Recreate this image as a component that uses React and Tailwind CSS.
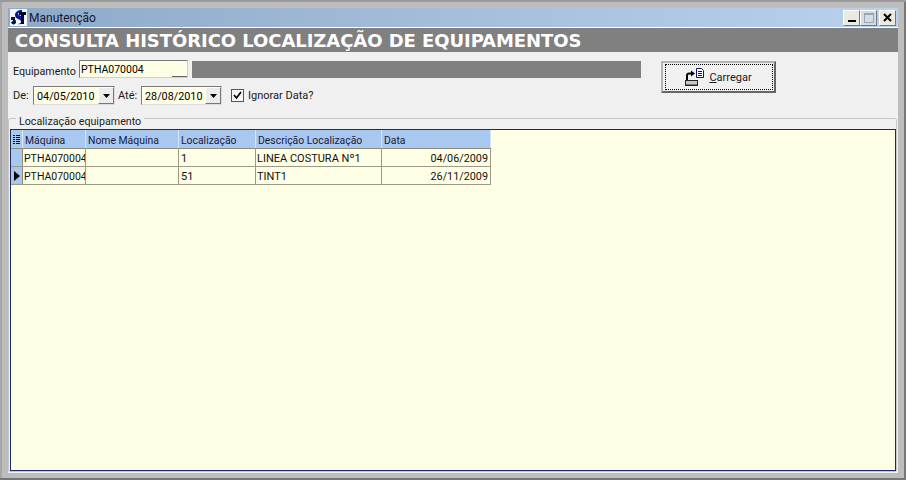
const columns = [
  { label: "Máquina", width: "w-[63px]" },
  { label: "Nome Máquina", width: "w-[93px]" },
  { label: "Localização", width: "w-[77px]" },
  { label: "Descrição Localização", width: "w-[126px]" },
  { label: "Data", width: "w-[109px]" },
];

const rows = [
  { maquina: "PTHA070004", local: "1", descricao: "LINEA COSTURA Nº1", data: "04/06/2009" },
  { maquina: "PTHA070004", local: "51", descricao: "TINT1", data: "26/11/2009", current: true },
];

function AppLogo() {
  return (
    <svg width="17" height="17" viewBox="0 0 17 17" className="shrink-0">
      <rect width="17" height="17" fill="#f4f6fb" />
      <path d="M3 11c2-1 3 0 3 2s-2 3-4 2l-1-2c1 0 2-1 2-2z" fill="#06103a" />
      <path d="M12 1c-4 0-7 2-7 5s3 4 5 5 1 4-2 4c3 1 6-1 6-4s-3-4-5-5-1-3 3-3z" fill="#0a1a8c" />
      <path d="M9 3h7v3h-2v9h-3V6H9z" fill="#02061f" />
      <path d="M1 8h4v3H1z" fill="#0a1236" />
    </svg>
  );
}

function WindowButton({ children, muted }) {
  return (
    <div className={`flex h-[16px] w-[17px] items-center justify-center border border-t-white border-l-white border-r-[#777] border-b-[#777] ${muted ? "bg-[#d4dde6]" : "bg-[#ece9e0]"}`}>
      {children}
    </div>
  );
}

function DateField({ value, width }) {
  return (
    <div className={`flex h-[19px] ${width} items-center border border-t-[#7a7a7a] border-l-[#7a7a7a] border-r-[#dcdcdc] border-b-[#dcdcdc] bg-[#ffffe5]`}>
      <span className="flex-1 pl-[3px] pt-[1px] text-[10.800px] text-black">{value}</span>
      <div className="flex h-[17px] w-[16px] items-center justify-center bg-[#ececec] border border-t-white border-l-white border-r-[#777] border-b-[#777]">
        <svg width="7" height="4" viewBox="0 0 7 4"><path d="M0 0h7L3.500 4z" fill="#000" /></svg>
      </div>
    </div>
  );
}

function LoadIcon() {
  return (
    <svg width="20" height="19" viewBox="0 0 20 19" className="shrink-0">
      <rect x="0.500" y="12.500" width="12" height="5" fill="#c8c8c8" stroke="#222" />
      <rect x="1" y="16" width="11" height="1" fill="#777" />
      <path d="M2 12V7.500C2 6 3 5.500 4 5.500h3" fill="none" stroke="#000" strokeWidth="2" />
      <path d="M6 2.500l4 3-4 3z" fill="#000" />
      <path d="M11.500 0.500h5l2 2v7h-7z" fill="#fff" stroke="#10106a" />
      <path d="M13 3.500h4M13 5.500h4M13 7.500h4" stroke="#10106a" />
    </svg>
  );
}

export default function App() {
  return (
    <div className="flex h-[480px] w-[906px] flex-col bg-[#bdbdbd] pl-[8px] pr-[8px] pt-[8px] pb-[7px] text-[11px] leading-[13px] text-[#1a1a1a] shadow-[inset_0_2px_0_#9a9a9a,inset_0_-2px_0_#777,inset_2px_0_0_#a6a6a6,inset_-2px_0_0_#777]" style={{ fontFamily: "Roboto, Tahoma, sans-serif" }}>
      <div className="flex h-[20px] shrink-0 items-center gap-[2px] border-b border-white bg-gradient-to-r from-[#8fa9c8] to-[#b8d2ee] pl-[2px] pr-[2px]">
        <AppLogo />
        <span className="flex-1 pt-[1px] text-[12px] text-[#10183a]">Manutenção</span>
        <div className="flex items-center">
          <WindowButton>
            <div className="mt-[6px] h-[2px] w-[8px] bg-black" />
          </WindowButton>
          <WindowButton muted>
            <div className="h-[10px] w-[10px] border border-[#9aa5b0] border-t-2" />
          </WindowButton>
          <div className="ml-[2px]">
            <WindowButton>
              <svg width="9" height="9" viewBox="0 0 9 9"><path d="M1 1l7 7M8 1l-7 7" stroke="#000" strokeWidth="2" /></svg>
            </WindowButton>
          </div>
        </div>
      </div>

      <div className="flex h-[24px] shrink-0 items-center bg-[#808080] pl-[7px] pt-[2px]">
        <h1 className="whitespace-nowrap text-[18px] font-bold leading-none tracking-[-0.06px] text-white" style={{ fontFamily: "'DejaVu Sans', Verdana, sans-serif" }}>
          CONSULTA HISTÓRICO LOCALIZAÇÃO DE EQUIPAMENTOS
        </h1>
      </div>

      <div className="flex min-h-0 flex-1 flex-col bg-[#f0f0f0] pr-[1px] pb-[1px]">
        <div className="flex h-[61px] shrink-0">
          <div className="flex w-[640px] flex-col pl-[5px] pt-[8px]">
            <div className="flex items-center">
              <span className="w-[66px] pt-[4px] text-[10.700px]">Equipamento</span>
              <div className="relative h-[18px] w-[109px] border border-t-[#7a7a7a] border-l-[#7a7a7a] border-r-[#cfcfcf] border-b-[#cfcfcf] bg-[#ffffe5] pl-[1px] pt-[2px] text-[10.500px] text-black">
                PTHA070004
                <div className="absolute bottom-0 right-0 h-[1px] w-[15px] bg-[#666]" />
              </div>
              <div className="ml-[4px] h-[17px] w-[449px] bg-[#808080]" />
            </div>
            <div className="mt-[8px] flex items-center">
              <span className="w-[20px]">De:</span>
              <DateField value="04/05/2010" width="w-[82px]" />
              <span className="ml-[3px] w-[23px]">Até:</span>
              <DateField value="28/08/2010" width="w-[81px]" />
              <div className="ml-[9px] flex h-[13px] w-[13px] items-center justify-center border border-[#555] bg-[#f6f6f6]">
                <svg width="9" height="9" viewBox="0 0 9 9"><path d="M1 4l2.500 3L8 1" fill="none" stroke="#000" strokeWidth="1.700" /></svg>
              </div>
              <span className="ml-[4px]">Ignorar Data?</span>
            </div>
          </div>
          <div className="pl-[13px] pt-[9px]">
            <button className="flex h-[32px] w-[115px] items-center justify-center border-2 border-t-[#b4b4b4] border-l-[#b4b4b4] border-r-[#666] border-b-[#666] bg-[#f0f0f0]">
              <div className="flex h-[26px] w-[108px] items-center justify-center gap-[4px] border border-dotted border-black">
                <LoadIcon />
                <span><span className="underline">C</span>arregar</span>
              </div>
            </button>
          </div>
        </div>

        <fieldset className="flex min-h-0 flex-1 flex-col rounded-[2px] border border-[#c8c8c8] pl-[1px]">
          <legend className="ml-[6px] translate-y-[4px] px-[3px] text-[10.700px] leading-[10px] text-[#222]">Localização equipamento</legend>
          <div className="mt-[6px] flex-1 border border-[#1b2b5e] bg-[#ffffe5]">
            <div className="flex h-[19px] w-fit border-b border-[#8c8c7c] bg-[#a9c8ef] text-[10.400px] text-[#1a1a3a]">
              <div className="flex w-[12px] items-center justify-center border-r border-[#e8e8e8]">
                <svg width="7" height="9" viewBox="0 0 7 9"><path d="M0 0.500h2M0 2.500h2M0 4.500h2M0 6.500h2M0 8.500h2M3 0.500h4M3 2.500h4M3 4.500h4M3 6.500h4M3 8.500h4" stroke="#111" /></svg>
              </div>
              {columns.map((col) => (
                <div key={col.label} className={`${col.width} flex items-center border-r border-[#d8e4f2] pl-[2px] pt-[2px]`}>
                  {col.label}
                </div>
              ))}
            </div>
            {rows.map((row) => (
              <div key={row.local} className="flex h-[18px] w-fit border-b border-[#9a9a86] text-[#111]">
                <div className="flex w-[12px] items-center justify-center border-r border-[#8c8c7c] bg-[#a9c8ef]">
                  {row.current && <svg width="6" height="10" viewBox="0 0 6 10"><path d="M0 0l6 5-6 5z" fill="#000" /></svg>}
                </div>
                <div className="flex w-[63px] items-center overflow-hidden whitespace-nowrap border-r border-[#9a9a86] pl-[1px] pt-[2px] text-[10.500px]">{row.maquina}</div>
                <div className="w-[93px] border-r border-[#9a9a86]" />
                <div className="flex w-[77px] items-center border-r border-[#9a9a86] pl-[2px] pt-[2px]">{row.local}</div>
                <div className="flex w-[126px] items-center border-r border-[#9a9a86] pl-[1px] pt-[2px]">{row.descricao}</div>
                <div className="flex w-[109px] items-center justify-end border-r border-[#9a9a86] pr-[2px] pt-[2px] text-[10.800px]">{row.data}</div>
              </div>
            ))}
          </div>
        </fieldset>
      </div>
    </div>
  );
}
